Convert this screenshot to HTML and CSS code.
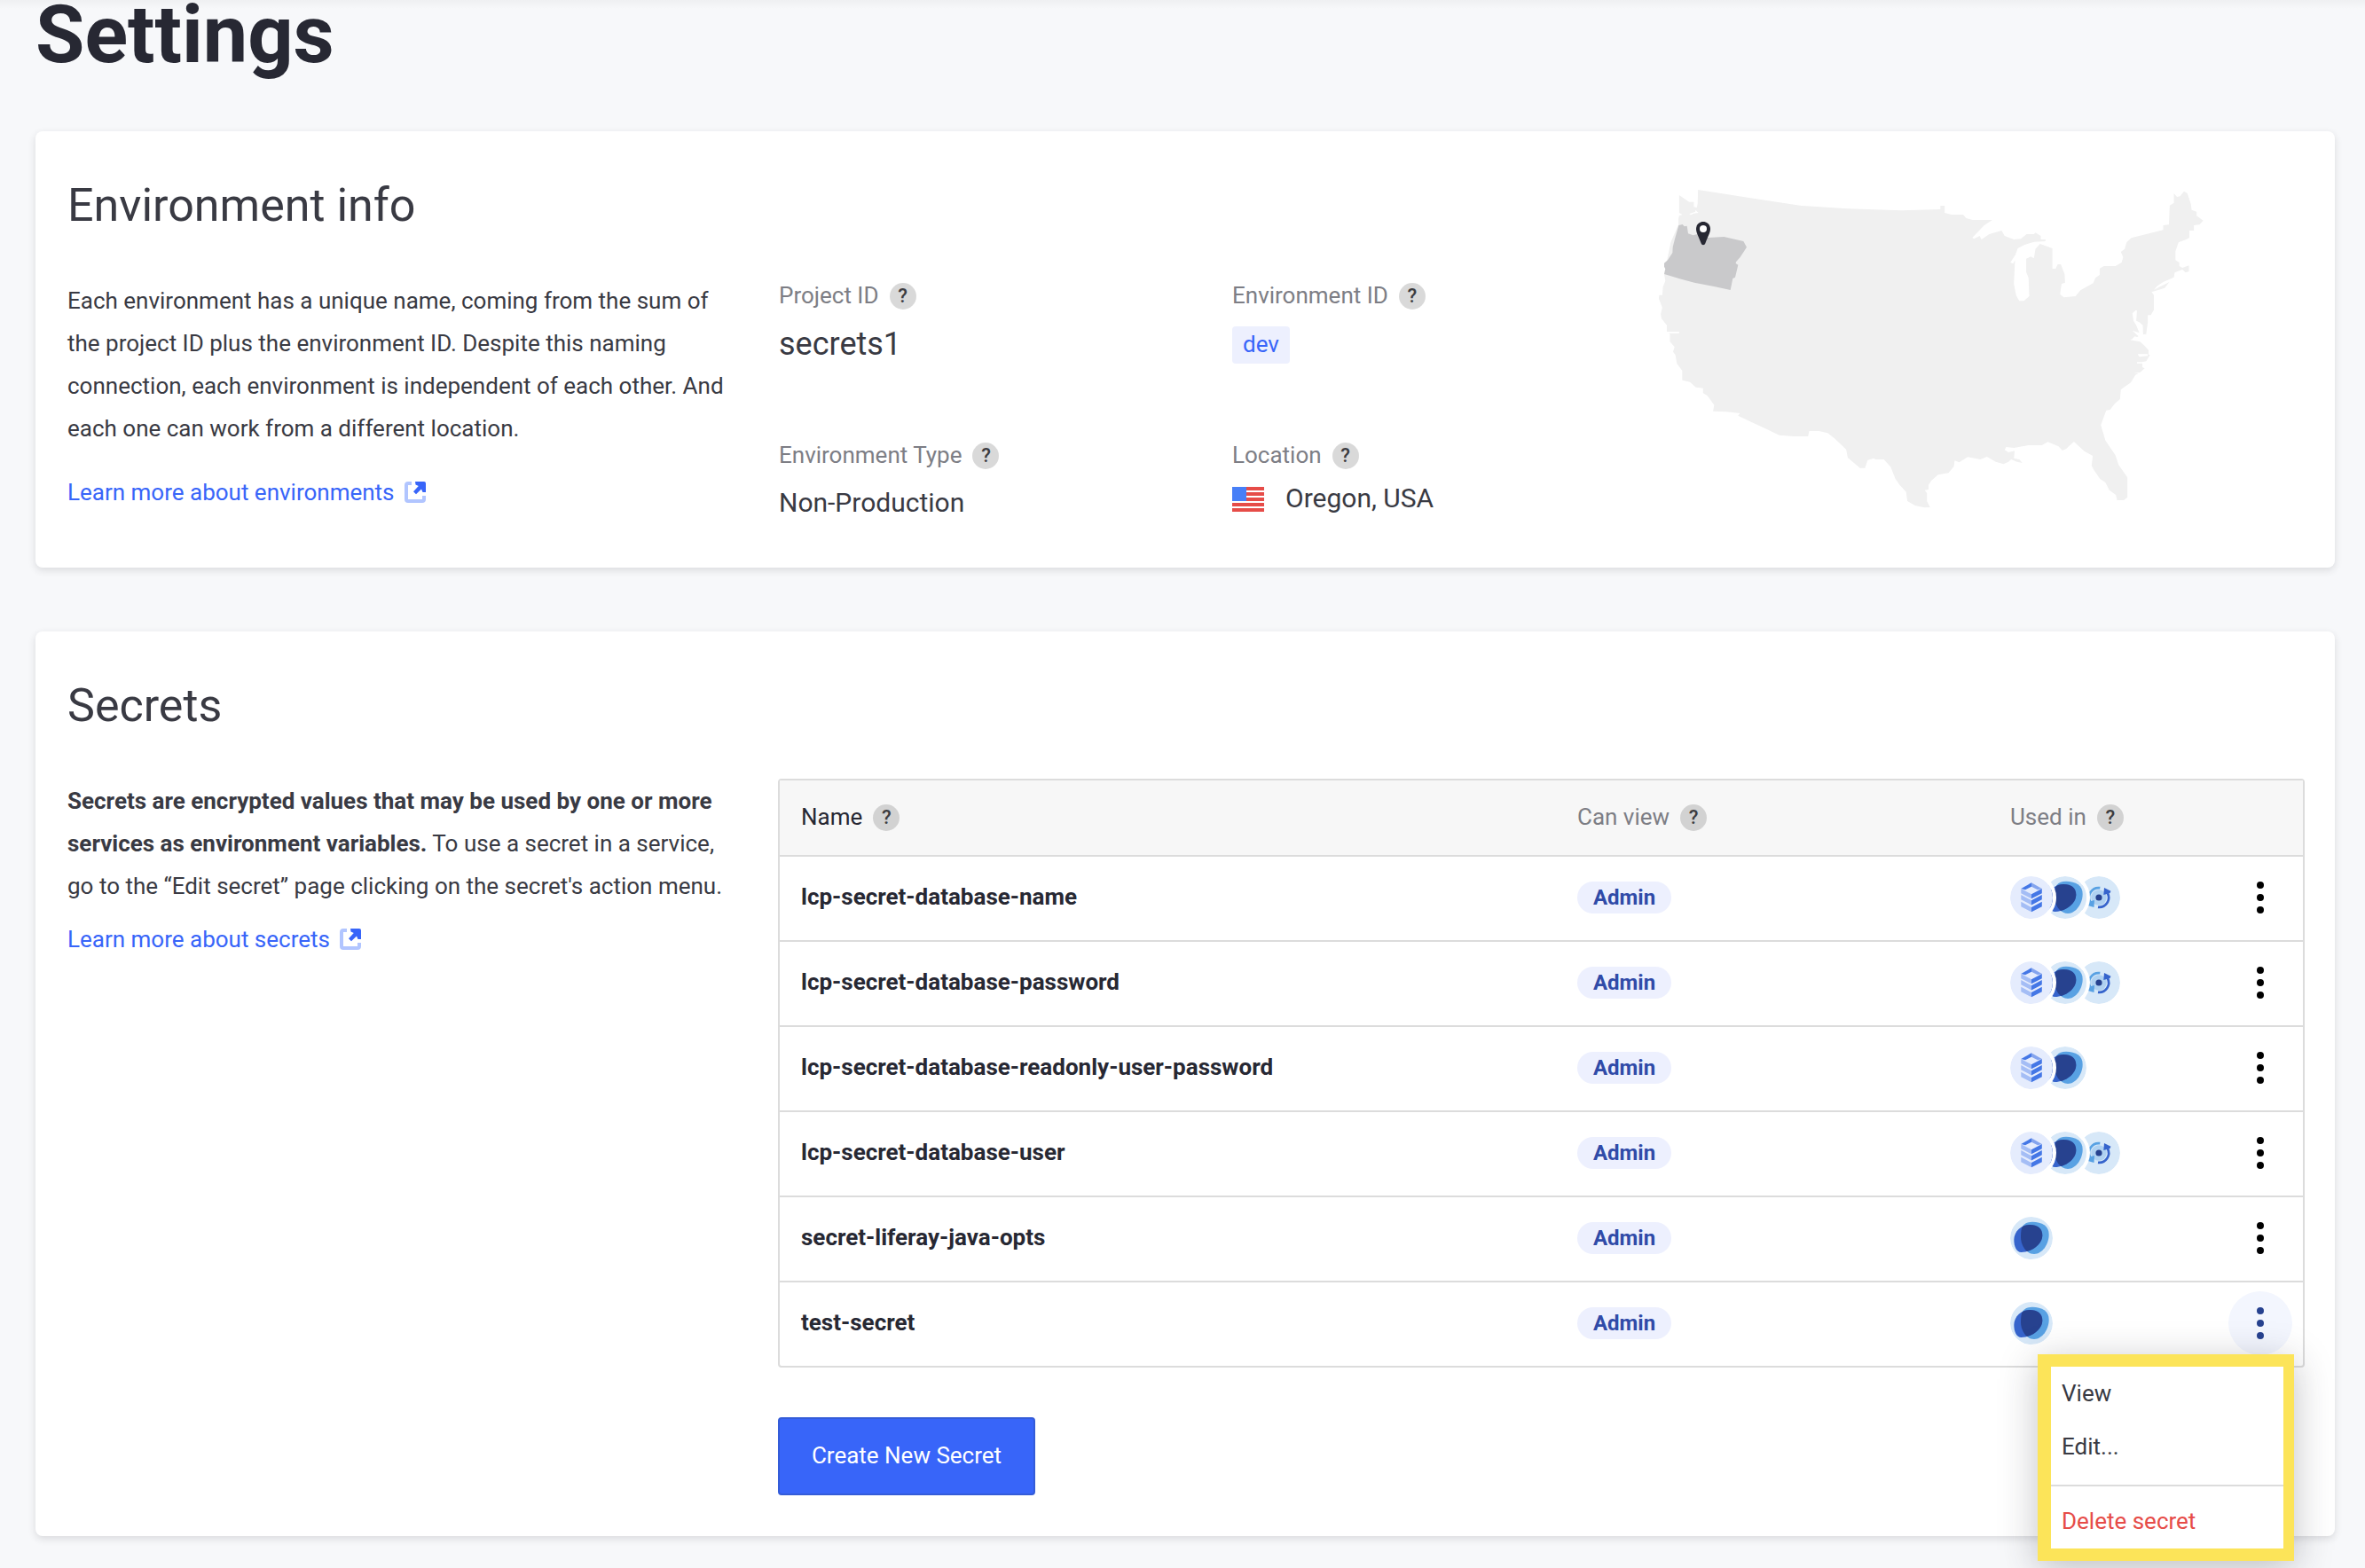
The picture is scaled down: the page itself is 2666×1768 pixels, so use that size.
FILE: index.html
```html
<!DOCTYPE html>
<html lang="en">
<head>
<meta charset="utf-8">
<title>Settings</title>
<link rel="stylesheet" href="styles.css">
</head>
<body>
<svg class="sprite" aria-hidden="true">
  <defs>
    <symbol id="external" viewBox="0 0 24 24">
      <path d="M8 2H4Q2 2 2 4V20Q2 22 4 22H20Q22 22 22 20V16" fill="none" stroke="#b1c5ff" stroke-width="4"/>
      <path d="M12 0H22Q24 0 24 2V12H20.5L19 8.5L13 14.2L10 11.2L15.8 5L12.5 3.5Z" fill="#3865f9"/>
    </symbol>
    <symbol id="database" viewBox="0 0 48 48">
      <circle cx="24" cy="24" r="24" fill="#e5ecfd"/>
      <path d="M24 7.3V11.8L17 15.3L12.3 13.9Z" fill="#4477e6"/>
      <path d="M24 7.3L35.8 13.9L31 15.3L24 11.8Z" fill="#84a4ee"/>
      <path d="M12.3 14L24 20.2V25.3L12.3 19.2ZM12.3 21L24 27.2V32.4L12.3 26.3ZM12.3 28.8L24 35V40.2L12.3 34.2Z" fill="#a4bdf5"/>
      <path d="M35.8 14L24 20.2V25.3L35.8 19.2ZM35.8 21L24 27.2V32.4L35.8 26.3ZM35.8 28.8L24 35V40.2L35.8 34.2Z" fill="#4477e6"/>
    </symbol>
    <clipPath id="blob-clip"><path d="M14.5 10C17 7 20 5.8 25 5.8C36 5.8 43.7 10.5 43.7 20C43.7 31 36 42 27 42C18 42 12 32 12 23C12 17 12.5 12.5 14.5 10Z"/></clipPath>
    <symbol id="liferay" viewBox="0 0 48 48">
      <circle cx="24" cy="24" r="24" fill="#d7e8f8"/>
      <path d="M14.5 10C17 7 20 5.8 25 5.8C36 5.8 43.7 10.5 43.7 20C43.7 31 36 42 27 42C18 42 12 32 12 23C12 17 12.5 12.5 14.5 10Z" fill="#58a1e3"/>
      <path d="M4.3 26C4.3 16 13 9 22 9C31 9 36.3 13 36.3 21C36.3 31 24 40 12.5 40C7 40 4.3 33 4.3 26Z" fill="#3664cc"/>
      <path clip-path="url(#blob-clip)" d="M4.3 26C4.3 16 13 9 22 9C31 9 36.3 13 36.3 21C36.3 31 24 40 12.5 40C7 40 4.3 33 4.3 26Z" fill="#27428f"/>
    </symbol>
    <symbol id="ci" viewBox="0 0 48 48">
      <circle cx="24" cy="24" r="24" fill="#d7e8f8"/>
      <circle cx="24" cy="24" r="8.7" fill="#afd1f1"/>
      <circle cx="24" cy="24" r="3.6" fill="#27428f"/>
      <path d="M25.3 13.2A10.8 10.8 0 0 0 14.2 29" fill="none" stroke="#58a1e3" stroke-width="2.7"/>
      <path d="M19 27L18.5 35L11.5 33L13 28.5Z" fill="#58a1e3"/>
      <path d="M23 34.8A10.8 10.8 0 0 0 33.8 19" fill="none" stroke="#3664cc" stroke-width="2.7"/>
      <path d="M30 13L37.5 16.8L36.5 19L29.3 21Z" fill="#3664cc"/>
    </symbol>
    <symbol id="dots" viewBox="0 0 8 36">
      <circle cx="4" cy="4" r="4"/><circle cx="4" cy="18" r="4"/><circle cx="4" cy="32" r="4"/>
    </symbol>
  </defs>
</svg>
<main class="page">
  <h1 class="title">Settings</h1>

  <section class="card card-env">
    <h2 class="card-title">Environment info</h2>
    <div class="about about-env">
      <p class="text">Each environment has a unique name, coming from the sum of the project ID plus the environment ID. Despite this naming connection, each environment is independent of each other. And each one can work from a different location.</p>
      <a class="link">Learn more about environments<svg class="link-icon"><use href="#external"/></svg></a>
    </div>
    <dl class="facts">
      <div class="fact">
        <dt class="label">Project ID<span class="help">?</span></dt>
        <dd class="value value-big">secrets1</dd>
      </div>
      <div class="fact">
        <dt class="label">Environment ID<span class="help">?</span></dt>
        <dd class="value"><span class="tag">dev</span></dd>
      </div>
      <div class="fact">
        <dt class="label">Environment Type<span class="help">?</span></dt>
        <dd class="value value-type">Non-Production</dd>
      </div>
      <div class="fact">
        <dt class="label">Location<span class="help">?</span></dt>
        <dd class="value value-place">
          <svg class="flag" viewBox="0 0 36 28"><rect width="36" height="28" rx="1.5" fill="#fff"/><path d="M0 0H36V4H0ZM0 6H36V10H0ZM0 12H36V16H0ZM0 18H36V22H0ZM0 24H36V28H0Z" fill="#e64c48"/><path d="M0 0H16V16H0Z" fill="#477ff7"/></svg>
          Oregon, USA
        </dd>
      </div>
    </dl>
    <svg class="map" viewBox="0 0 680 400">
      <g transform="scale(.43367 .33333)">
        <path fill="#f0f0f0" d="M171 72L300 98L440 126L560 136L700 142L801 138V126H812V150L830 156H860L868 168L885 174H936L915 192L884 234L888 238L903 228L908 240L928 222L960 210L968 228L992 240L1010 238L1025 222H1044L1048 217L1062 228V240H1074V246L1045 248L1020 258L1002 270L996 292L983 318L990 322L995 310L992 390L998 430L1006 448H1018L1032 432L1030 370L1024 350V305L1036 298L1044 304L1048 272L1060 255L1092 270V338L1100 340L1106 324L1114 324L1124 358L1125 386L1116 390L1112 425L1122 436L1152 432L1165 412L1198 388L1204 370L1215 360V338L1226 330H1256L1272 318L1276 300L1270 282L1280 272L1285 250L1297 235L1380 208V192L1395 190L1397 125L1408 116V84L1416 96L1424 94L1434 77L1443 84L1452 120L1454 140L1467 146V160L1484 176L1475 190L1460 192V210H1448V234L1440 240L1420 250L1412 280V310L1422 318V330L1430 336L1447 328V348L1438 352L1430 342L1410 352L1408 368L1380 384L1366 396L1356 410L1396 384L1384 404L1350 418L1356 428V478L1348 496H1340V520L1336 560L1328 562L1327 530L1318 520L1310 515L1312 480H1308L1300 490L1303 515L1310 530L1318 556L1300 548L1316 568L1294 580L1320 586L1332 600L1342 614V630H1346L1336 652L1326 655V672L1332 676L1320 690L1308 698L1296 724L1270 748L1268 780L1254 796L1242 816L1232 818L1218 868L1230 920L1256 970L1264 1002L1287 1045V1112L1278 1122H1260L1257 1104L1240 1088L1230 1062L1216 1050L1200 1020L1194 1006L1197 972L1175 956L1148 924L1128 948L1118 954L1108 940L1080 925L1065 936H1030L992 945L972 942L968 952L978 960L994 955L992 980L1006 984L1014 996L1000 992L985 984L978 992L965 1000L945 992L922 975L905 984L872 976L850 994L838 988L836 1008L822 1030L795 1036L778 1055L770 1070V1086L760 1088L766 1098V1125L774 1146L760 1147L735 1140L715 1125L712 1094L695 1070L684 1050L672 1010L654 984H632L628 980L612 986L605 1013H592L560 978L556 950L525 912L508 895L485 888H460L457 906L420 906L382 902L350 882L310 858L275 836L280 828L245 823L210 821L213 800L195 768L184 760V743L165 740L150 722L130 716V684L116 660L112 630L106 620L110 604L98 586V560L90 552V530L76 508L74 492L78 470L69 440L70 428H78L80 400L86 380L83 357L100 250L120 190V170L122 160L130 156L122 150V90L148 113H160V130L168 132L170 118Z"/>
        <path fill="#fff" d="M148 154L164 146V140L172 150L160 152L152 157ZM88 552H122V557H90ZM1314 628H1340V634L1318 637ZM1306 568L1322 574L1300 576ZM1312 655H1330V659H1312ZM1304 690H1320V694Z"/>
      </g>
      <path transform="translate(20 10) scale(.33333)" fill="#c9c9cb" d="M97 162L110 159L116 166L125 164L129 190L146 196L160 192L172 198L196 204L250 201L316 216L327 236L305 270L291 286L290 291L298 296L288 338L280 342L272 381L220 370L150 356L100 343L48 327L52 310L48 302V290L60 280L76 255L77 236L83 212Z"/>
      <path fill="#272833" d="M80 60C75.5 60 72 63.5 72 68C72 72.5 75 77 77.5 84C78.5 87 81.5 87 82.5 84C85 77 88 72.5 88 68C88 63.5 84.5 60 80 60Z"/>
      <circle cx="80" cy="68" r="4" fill="#fff"/>
    </svg>
  </section>

  <section class="card card-secrets">
    <h2 class="card-title">Secrets</h2>
    <div class="about about-secrets">
      <p class="text"><strong>Secrets are encrypted values that may be used by one or more services as environment variables.</strong> To use a secret in a service, go to the “Edit secret” page clicking on the secret's action menu.</p>
      <a class="link">Learn more about secrets<svg class="link-icon"><use href="#external"/></svg></a>
    </div>
    <div class="secrets">
      <div class="table">
        <div class="row head">
          <div class="label label-dark">Name<span class="help">?</span></div>
          <div class="label">Can view<span class="help">?</span></div>
          <div class="label">Used in<span class="help">?</span></div>
        </div>
        <div class="row">
          <div class="name">lcp-secret-database-name</div>
          <div><span class="role">Admin</span></div>
          <div class="services"><svg><use href="#database"/></svg><svg><use href="#liferay"/></svg><svg><use href="#ci"/></svg></div>
          <div class="action"><svg><use href="#dots"/></svg></div>
        </div>
        <div class="row">
          <div class="name">lcp-secret-database-password</div>
          <div><span class="role">Admin</span></div>
          <div class="services"><svg><use href="#database"/></svg><svg><use href="#liferay"/></svg><svg><use href="#ci"/></svg></div>
          <div class="action"><svg><use href="#dots"/></svg></div>
        </div>
        <div class="row">
          <div class="name">lcp-secret-database-readonly-user-password</div>
          <div><span class="role">Admin</span></div>
          <div class="services"><svg><use href="#database"/></svg><svg><use href="#liferay"/></svg></div>
          <div class="action"><svg><use href="#dots"/></svg></div>
        </div>
        <div class="row">
          <div class="name">lcp-secret-database-user</div>
          <div><span class="role">Admin</span></div>
          <div class="services"><svg><use href="#database"/></svg><svg><use href="#liferay"/></svg><svg><use href="#ci"/></svg></div>
          <div class="action"><svg><use href="#dots"/></svg></div>
        </div>
        <div class="row">
          <div class="name">secret-liferay-java-opts</div>
          <div><span class="role">Admin</span></div>
          <div class="services"><svg><use href="#liferay"/></svg></div>
          <div class="action"><svg><use href="#dots"/></svg></div>
        </div>
        <div class="row">
          <div class="name">test-secret</div>
          <div><span class="role">Admin</span></div>
          <div class="services"><svg><use href="#liferay"/></svg></div>
          <div class="action action-open"><svg><use href="#dots"/></svg>
            <div class="menu">
              <div class="menu-item">View</div>
              <div class="menu-item">Edit...</div>
              <div class="menu-item menu-delete">Delete secret</div>
            </div>
          </div>
        </div>
      </div>
      <button class="create">Create New Secret</button>
    </div>
  </section>
</main>
</body>
</html>
```
FILE: styles.css
```css
* { box-sizing: border-box; }
html, body { margin: 0; height: 1768px; overflow: hidden; }
body {
  background: #f7f8fa;
  color: #393a43;
  font: 26px/32px Roboto, "Liberation Sans", sans-serif;
}
h1, h2, p, dl, dd { margin: 0; }
.sprite { display: block; width: 0; height: 0; }

.page {
  display: flow-root;
  height: 1768px;
  padding: 0 34px 0 40px;
  background: linear-gradient(#eff0f2, #f7f8fa 10px);
}
.title {
  margin: -13px 0 55px;
  color: #272833;
  font-size: 90px;
  line-height: 106px;
  font-weight: 700;
}

.card {
  display: grid;
  grid-template-rows: 64px 1fr;
  row-gap: 51px;
  padding: 52px 34px 0 36px;
  border-radius: 8px;
  background: #fff;
  box-shadow: 0 3px 8px rgba(39, 40, 51, .14);
}
.card-env { grid-template-columns: 802px 962px 1fr; height: 492px; margin-bottom: 72px; }
.card-secrets { grid-template-columns: 801px 1fr; height: 1020px; }
.card-title { grid-column: 1 / 3; font-size: 52px; line-height: 64px; font-weight: 400; }
.about { grid-column: 1; grid-row: 2; width: 745px; }
.text { line-height: 48px; }
.link { display: flex; align-items: center; gap: 11px; color: #3865f9; }
.about-env .link { margin-top: 32px; }
.about-secrets .link { margin-top: 20px; }
.link-icon { width: 24px; height: 24px; }

.facts {
  display: grid;
  grid-template-columns: 511px 1fr;
  grid-template-rows: 180px 1fr;
  padding-top: 3px;
}
.label { display: flex; align-items: flex-start; gap: 12px; height: 32px; color: #7d7e85; line-height: 30px; }
.label-dark { color: #272833; }
.help {
  width: 30px;
  height: 30px;
  margin-top: 1px;
  border-radius: 50%;
  background: rgba(0, 0, 0, .15);
  color: #3c3c40;
  font-size: 22px;
  line-height: 30px;
  font-weight: 500;
  text-align: center;
}
.value-big { margin-top: 16px; font-size: 36px; line-height: 44px; }
.value-type { margin-top: 19px; font-size: 30px; line-height: 36px; }
.value-place { display: flex; align-items: flex-start; gap: 24px; margin-top: 14px; font-size: 30px; line-height: 36px; }
.flag { width: 36px; height: 28px; margin-top: 5px; }
.tag {
  display: inline-block;
  height: 42px;
  margin-top: 18px;
  padding: 0 12px;
  border-radius: 4px;
  background: #edf0fe;
  color: #3865f9;
  line-height: 40px;
}
.map { grid-column: 3; grid-row: 1 / 3; width: 680px; height: 400px; margin-top: -10px; }

.secrets { margin-top: -1px; }
.table { border: 2px solid #dcdcdc; border-radius: 4px; }
.row {
  display: grid;
  grid-template-columns: 875px 488px 246px 72px;
  align-items: center;
  height: 96px;
  padding: 0 0 2px 24px;
  border-top: 2px solid #dcdcdc;
}
.row.head { height: 84px; padding-bottom: 0; border-top: 0; background: #f7f7f7; }
.name { padding-bottom: 2px; color: #272833; font-weight: 700; }
.role {
  display: block;
  width: 106px;
  height: 36px;
  border-radius: 18px;
  background: #edf0fe;
  color: #304ba8;
  font-size: 24px;
  line-height: 36px;
  font-weight: 700;
  text-align: center;
}
.services { display: flex; }
.services svg { position: relative; width: 48px; height: 48px; margin-right: -10px; border-radius: 50%; box-shadow: 0 0 0 4px #fff; }
.services svg:nth-child(1) { z-index: 3; }
.services svg:nth-child(2) { z-index: 2; }
.services svg:nth-child(3) { z-index: 1; }
.action { position: relative; display: grid; place-items: center; height: 72px; border-radius: 50%; }
.action > svg { width: 8px; height: 36px; }
.action-open { background: #f3f6fe; fill: #27428f; }

.menu {
  position: absolute;
  z-index: 5;
  top: 71px;
  right: -2px;
  width: 289px;
  height: 233px;
  padding-top: 14px;
  border: solid #fce459;
  border-width: 14px 12px 14px 15px;
  background: #fff;
  box-shadow: 0 8px 40px rgba(39, 40, 51, .28);
}
.menu-item { height: 60px; padding-left: 12px; }
.menu-delete { margin-top: -1px; padding-top: 23px; border-top: 2px solid #dcdcdc; color: #e64c48; }

.create {
  display: block;
  width: 290px;
  height: 88px;
  margin-top: 56px;
  padding: 0 0 2px;
  border: 2px solid #345cd8;
  border-radius: 4px;
  background: #3865f9;
  color: #fff;
  font: inherit;
}
```
